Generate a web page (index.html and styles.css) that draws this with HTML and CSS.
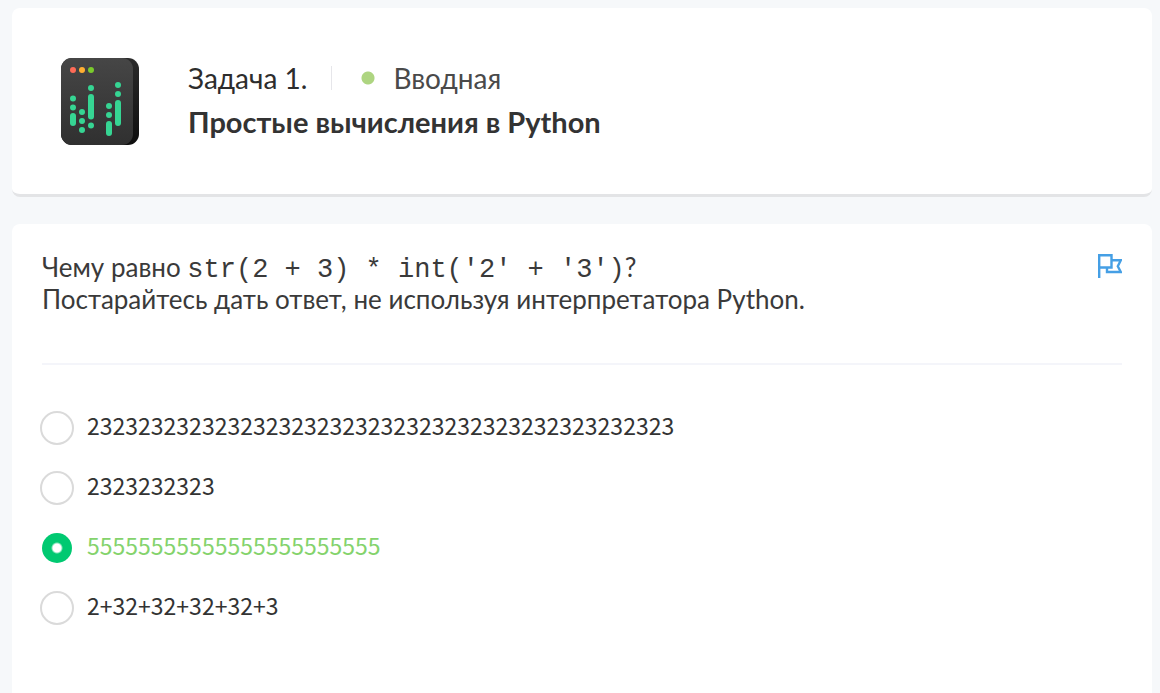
FILE: index.html
```html
<!DOCTYPE html>
<html lang="ru">
<head>
<meta charset="utf-8">
<meta name="viewport" content="width=device-width, initial-scale=1">
<title>Простые вычисления в Python</title>
<link rel="stylesheet" href="styles.css">
</head>
<body>
<main class="page">
  <header class="card task-header">
    <svg class="task-icon" viewBox="0 0 78 87" aria-hidden="true">
      <defs>
        <linearGradient id="face" x1="0" y1="0" x2="0" y2="1"><stop offset="0" stop-color="#464646"/><stop offset="1" stop-color="#303030"/></linearGradient>
        <linearGradient id="side" x1="0" y1="0" x2="0" y2="1"><stop offset="0" stop-color="#2b2b2b"/><stop offset="1" stop-color="#0e0e0e"/></linearGradient>
      </defs>
      <rect width="78" height="87" rx="11" fill="url(#side)"/>
      <rect width="72" height="87" rx="11" fill="url(#face)"/>
      <circle cx="12" cy="12" r="3" fill="#ff6b57"/>
      <circle cx="21" cy="12" r="3" fill="#ffaf32"/>
      <circle cx="30" cy="12" r="3" fill="#7acb2c"/>
      <g fill="#36d593">
        <circle cx="12" cy="40.500" r="3"/><circle cx="12" cy="49.500" r="3"/><rect x="9" y="55" width="6" height="13" rx="3"/>
        <circle cx="21" cy="54" r="3"/><circle cx="21" cy="63" r="3"/><circle cx="21" cy="72" r="3"/>
        <circle cx="30" cy="30" r="3"/><rect x="27" y="36" width="6" height="25.500" rx="3"/><circle cx="30" cy="67.500" r="3"/>
        <circle cx="48" cy="48" r="3"/><circle cx="48" cy="57" r="3"/><rect x="45" y="63" width="6" height="15" rx="3"/>
        <circle cx="57" cy="27" r="3"/><circle cx="57" cy="36" r="3"/><rect x="54" y="42" width="6" height="26" rx="3"/>
      </g>
    </svg>
    <div class="task-info">
      <div class="task-meta">
        <span class="task-number">Задача 1.</span>
        <span class="task-level">Вводная</span>
      </div>
      <h1 class="task-title">Простые вычисления в Python</h1>
    </div>
  </header>

  <section class="card question">
    <div class="question-head">
      <p class="question-text" id="question">Чему равно <code>str(2 + 3) * int('2' + '3')</code>?<br>Постарайтесь дать ответ, не используя интерпретатора Python.</p>
      <button class="flag" type="button" aria-label="Отметить">
        <svg class="flag-icon" viewBox="0 0 24 24" aria-hidden="true"><path d="M1.200 24V1.200H13.500V13.500H1.200M14 6.200H22.800L19.800 12.300L22.800 18H9V13.500" fill="none" stroke="#459fe5" stroke-width="2.400"/></svg>
      </button>
    </div>
    <form class="options" role="radiogroup" aria-labelledby="question">
      <label class="option"><input class="radio" type="radio" name="answer"><span class="option-text">2323232323232323232323232323232323232323232323</span></label>
      <label class="option"><input class="radio" type="radio" name="answer"><span class="option-text">2323232323</span></label>
      <label class="option"><input class="radio" type="radio" name="answer" checked><span class="option-text">55555555555555555555555</span></label>
      <label class="option"><input class="radio" type="radio" name="answer"><span class="option-text">2+32+32+32+32+3</span></label>
    </form>
  </section>
</main>
</body>
</html>
```
FILE: styles.css
```css
* { box-sizing: border-box; }

body {
  margin: 0;
  background: #f6f8fa;
  color: #3a3a3a;
  font-family: Lato, "Open Sans", sans-serif;
}

.page {
  display: flex;
  flex-direction: column;
  gap: 27px;
  min-height: 100vh;
  padding: 8px 8px 0 12px;
}

.card {
  background: #fff;
  border-radius: 8px;
}

.task-header {
  display: flex;
  align-items: center;
  gap: 49px;
  padding: 50px 49px 49px;
  border-bottom: 3px solid #e3e4e6;
}

.task-icon {
  flex: none;
  width: 78px;
  height: 87px;
}

.task-info {
  display: flex;
  flex-direction: column;
  gap: 8px;
  padding-bottom: 4px;
}

.task-meta {
  display: flex;
  align-items: center;
  color: #333;
  font-size: 28px;
  line-height: 36px;
}

.task-number {
  color: #2d2d2d;
}

.task-level {
  display: flex;
  align-items: center;
  color: #4a4a4a;
}

.task-level::before {
  content: "";
  width: 43px;
  height: 24px;
  margin-left: 24px;
  margin-right: 18px;
  border-left: 1px solid #e6e6ea;
  background: radial-gradient(circle at 36px 12px, #aed581 6px, transparent 7px);
}

.task-title {
  margin: 0;
  color: #333;
  font-size: 29px;
  line-height: 36px;
  font-weight: 700;
}

.question {
  flex: 1;
  border-radius: 8px 8px 0 0;
  padding: 28px 30px 40px;
}

.question-head {
  display: flex;
  justify-content: space-between;
  align-items: flex-start;
  padding-bottom: 48px;
  border-bottom: 2px solid #f4f5fa;
}

.question-text {
  margin: 0;
  font-size: 26px;
  line-height: 31px;
}

.question-text code {
  font-family: "Liberation Mono", monospace;
  font-size: 27px;
  line-height: 28px;
}

.flag {
  padding: 2px 0;
  border: 0;
  background: none;
}

.flag-icon {
  display: block;
  width: 24px;
  height: 24px;
}

.options {
  display: flex;
  flex-direction: column;
  gap: 26px;
  padding-top: 46px;
}

.option {
  display: flex;
  align-items: center;
  gap: 13px;
  margin-left: -2px;
}

.radio {
  flex: none;
  appearance: none;
  width: 34px;
  height: 34px;
  margin: 0;
  border: 2px solid #dadada;
  border-radius: 50%;
  background: #fff;
}

.radio:checked {
  border-color: transparent;
  background: radial-gradient(circle, #fff 4px, #00c971 6px) padding-box;
}

.option-text {
  padding-bottom: 6px;
  color: #333;
  font-family: "Noto Sans CJK SC", sans-serif;
  font-size: 23px;
  line-height: 26px;
}

.radio:checked + .option-text {
  color: #84d36c;
}
```
